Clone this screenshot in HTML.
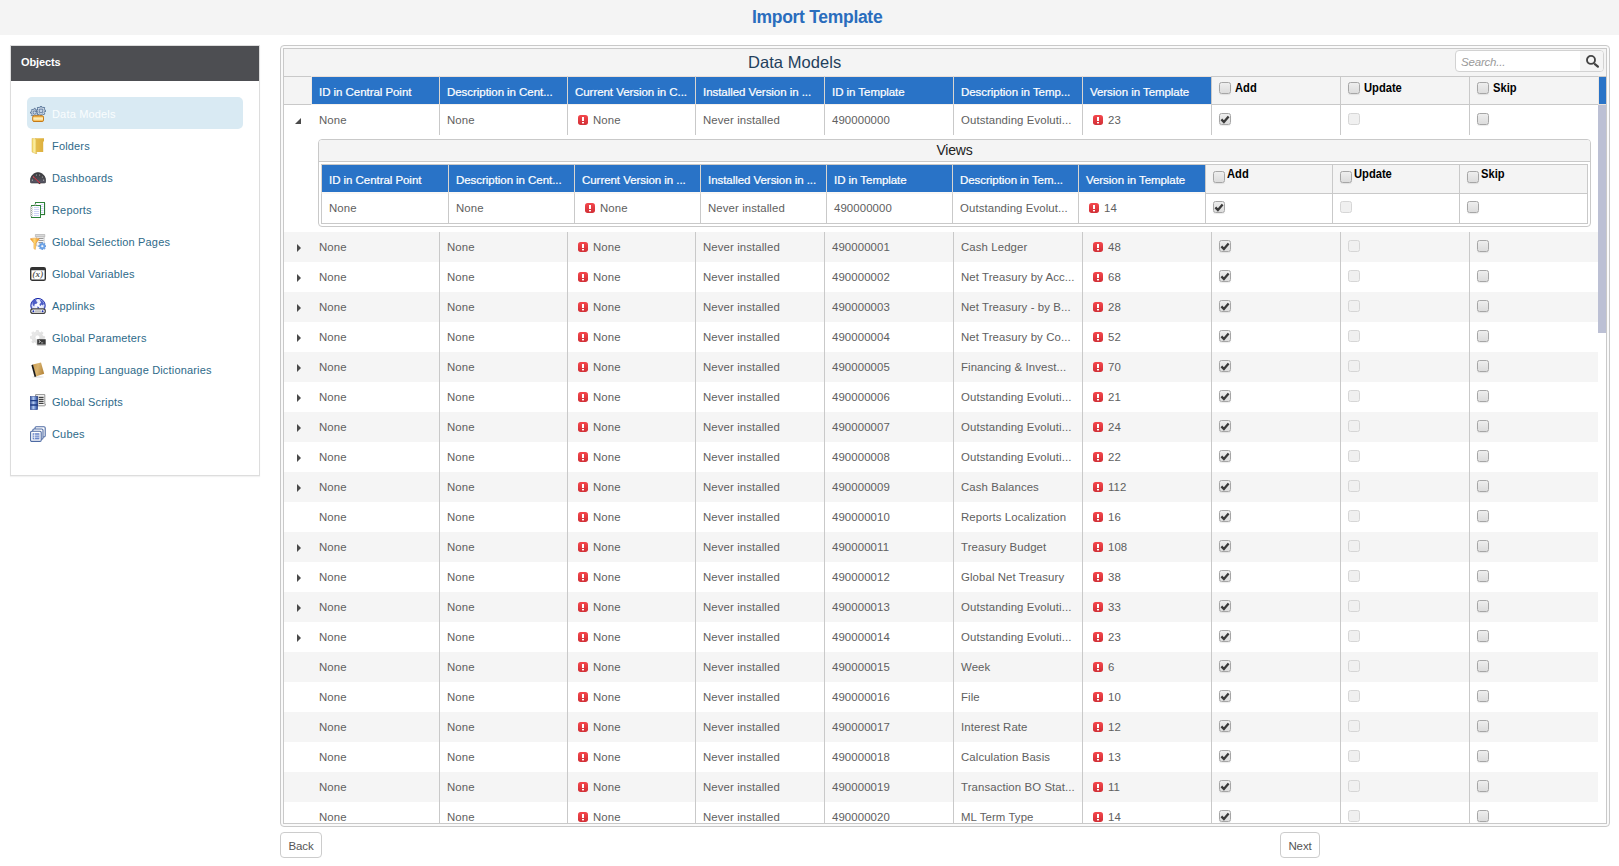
<!DOCTYPE html>
<html lang="en">
<head>
<meta charset="utf-8">
<title>Import Template</title>
<style>
*{box-sizing:border-box}
html,body{margin:0;padding:0}
body{width:1619px;height:866px;overflow:hidden;background:#fff;position:relative;
 font-family:"Liberation Sans",sans-serif;font-size:11px;color:#595959}
.topbar{position:absolute;left:0;top:0;width:1619px;height:35px;background:#f4f4f4}
.topbar h1{position:absolute;left:752px;top:6px;margin:0;font-size:17.5px;line-height:22px;font-weight:bold;color:#2a6dbd;letter-spacing:-.3px;white-space:nowrap}

/* sidebar */
.side{position:absolute;left:10px;top:45px;width:250px;height:431px;border:1px solid #ddd;background:#fff;box-shadow:0 1px 1px rgba(0,0,0,.05)}
.side-h{height:35px;background:#4d4e52;color:#fff;font-weight:bold;font-size:11px;line-height:33px;padding-left:10px;letter-spacing:-.12px}
.side-b{padding:16px 16px 0 16px}
.item{height:32px;width:216px;border-radius:5px;position:relative;color:#2e6a89;font-size:11px;line-height:34px;white-space:nowrap}
.item.sel{background:#d9eaf3;color:#fafdfe}
.item svg{position:absolute;left:3px;top:9px}
.item span{position:absolute;left:25px;top:0;letter-spacing:.17px}

/* grid */
.gouter{position:absolute;left:280px;top:45px;width:1330px;height:782px;border:1px solid #c9c9c9;border-radius:4px;padding:2px;background:#fafafa}
.ginner{width:1324px;height:776px;border:1px solid #c9c9c9;position:relative;overflow:hidden;background:#fff}
.toolbar{height:27px;background:#f4f4f4;position:relative}
.gtitle{position:absolute;left:464px;top:1px;font-size:16.5px;line-height:24px;color:#23405c;letter-spacing:.06px;white-space:nowrap}
.search{position:absolute;left:1171px;top:1px;width:149px;height:22px;border:1px solid #d2d2d2;border-radius:4px;background:#fff;overflow:hidden}
.search .ph{position:absolute;left:5px;top:1px;line-height:21px;font-style:italic;font-size:11.5px;color:#9a9a9a;letter-spacing:-.19px}
.search .sbtn{position:absolute;right:0;top:0;width:23px;height:20px;background:#f4f4f4}
.search .sbtn svg{position:absolute;left:5px;top:3px}

.ghead{height:29px;position:relative;background:#fff}
.hsb{position:absolute;left:1314px;top:0;width:8px;height:29px;background:#2973c7;border-top:1px solid #c9c9c9;border-bottom:1px solid #e6e0da;border-left:1px solid #ece6e0}
table{border-collapse:separate;border-spacing:0;table-layout:fixed}
.mtable{width:1314px}
th,td{padding:0 0 0 7px;border-left:1px solid #c9c9c9;text-align:left;white-space:nowrap;overflow:hidden;font-weight:normal;vertical-align:middle}
th{height:29px;box-shadow:inset 0 1px 0 #eadfd8,inset 0 -1px 0 #f6f1ec;border-left-color:#d9d5d0;background:#2973c7;color:#fff;font-weight:normal;font-size:11.5px;letter-spacing:-.05px;padding-top:3px;padding-left:7px;-webkit-text-stroke:.22px #fff}
th.h{background:#f4f4f4;border-left:0;padding:0;box-shadow:inset 0 1px 0 #c9c9c9,inset 0 -1px 0 #c9c9c9}
th.h + th{border-left-color:#efe9e4}
th.ck{background:#f4f4f4;border-color:#c9c9c9;box-shadow:inset 0 1px 0 #c9c9c9,inset 0 -1px 0 #c9c9c9;color:#000;font-size:12px;padding-top:0;padding-left:7px;vertical-align:top;letter-spacing:0;-webkit-text-stroke:0}
th.ck .cb{margin-top:6px;vertical-align:top}
th.ck b{font-weight:bold;display:inline-block;margin-left:4px;line-height:14px;margin-top:5px;transform:scaleX(.93);transform-origin:0 50%;vertical-align:top}
td{height:30px;font-size:11.4px;color:#606060;letter-spacing:.1px}
td.h{border-left:0;padding:0;position:relative}
td.h + td{border-left-color:transparent}
tr.alt td{background:#f5f5f5}
.gbody{height:718px;overflow:hidden;position:relative}
.vthumb{position:absolute;left:1314px;top:0;width:8px;height:228px;background:#bcc0d4}
.warn{display:inline-block;vertical-align:middle;margin:0 5px 0 3px;position:relative;top:-1px}
td .warn + *{}
.cb{display:inline-block;width:12px;height:12px;border:1px solid #a6a6a6;border-radius:2.5px;background:linear-gradient(#eee,#dcdcdc);vertical-align:top;position:relative;box-shadow:0 1px 1px rgba(0,0,0,.08)}
td.c{padding-left:7px}
td.c .cb{margin-top:0;vertical-align:middle;position:relative;top:-1px}
.cb.dis{border-color:#d6d6d6;background:#f0f0f0;box-shadow:none}
.cb svg{position:absolute;left:0;top:0}
.aopen{position:absolute;left:11px;top:13px;width:0;height:0;border-style:solid;border-width:0 0 6px 6px;border-color:transparent transparent #4a4a4a transparent}
.aclosed{position:absolute;left:13px;top:12px;width:0;height:0;border-style:solid;border-width:4px 0 4px 4px;border-color:transparent transparent transparent #4a4a4a}

/* detail */
tr.detail > td{height:97px;background:#fff}
td.dcell{padding:4px 7px 5px 7px;border-left:0;vertical-align:top;overflow:visible}
.ngrid{width:1273px;height:88px;border:1px solid #c9c9c9;border-radius:4px;background:#fff;overflow:hidden}
.ntitle{height:22px;background:#f4f4f4;border-bottom:1px solid #c9c9c9;text-align:center;font-size:14px;line-height:20px;color:#222;letter-spacing:-.2px}
.nwrap{padding:2px}
.ntable{width:1267px;border:1px solid #c9c9c9;border-left:0;border-bottom:0}
.ntable th{height:29px;box-shadow:inset 0 -2px 0 #fbf8f5;padding-top:1px}
.ntable th.ck{height:29px;box-shadow:inset 0 -1px 0 #c9c9c9;padding-top:0}
.ntable td{height:30px;background:#fff;border-bottom:1px solid #c9c9c9;padding-bottom:1px}
.ntable th.ck .cb{margin-top:6px;margin-left:0}
.ntable th.ck b{margin-left:2px;margin-top:2px}

.btn{position:absolute;top:832px;height:26px;border:1px solid #ccc;border-radius:4px;background:#fff;color:#555;font-size:11.5px;line-height:27px;text-align:center;letter-spacing:-.1px}
.btn.back{left:280px;width:42px}
.btn.next{left:1280px;width:40px}

</style>
</head>
<body>
<div class="topbar"><h1>Import Template</h1></div>

<div class="side">
  <div class="side-h">Objects</div>
  <div class="side-b"><div class="item sel"><svg width="16" height="16" viewBox="0 0 16 16" ><defs><linearGradient id="dmo" x1="0" y1="0" x2="0" y2="1"><stop offset="0" stop-color="#f0a32a"/><stop offset=".3" stop-color="#fbd98a"/><stop offset=".55" stop-color="#fff3c8"/><stop offset="1" stop-color="#f2a21d"/></linearGradient></defs><path d="M4.05 3.57 L4.16 2.33 L5.24 2.33 L5.35 3.57 L6.38 4.00 L7.34 3.20 L8.10 3.96 L7.30 4.92 L7.73 5.95 L8.97 6.06 L8.97 7.14 L7.73 7.25 L7.30 8.28 L8.10 9.24 L7.34 10.00 L6.38 9.20 L5.35 9.63 L5.24 10.87 L4.16 10.87 L4.05 9.63 L3.02 9.20 L2.06 10.00 L1.30 9.24 L2.10 8.28 L1.67 7.25 L0.43 7.14 L0.43 6.06 L1.67 5.95 L2.10 4.92 L1.30 3.96 L2.06 3.20 L3.02 4.00 z" fill="#dfe8f2" stroke="#46658c" stroke-width="0.8" stroke-linejoin="round"/><circle cx="4.7" cy="6.6" r="1.7" fill="#c3d3e6" stroke="#46658c" stroke-width="0.8"/><path d="M10.26 1.45 L10.39 0.04 L11.61 0.04 L11.74 1.45 L12.91 1.94 L14.00 1.03 L14.87 1.90 L13.96 2.99 L14.45 4.16 L15.86 4.29 L15.86 5.51 L14.45 5.64 L13.96 6.81 L14.87 7.90 L14.00 8.77 L12.91 7.86 L11.74 8.35 L11.61 9.76 L10.39 9.76 L10.26 8.35 L9.09 7.86 L8.00 8.77 L7.13 7.90 L8.04 6.81 L7.55 5.64 L6.14 5.51 L6.14 4.29 L7.55 4.16 L8.04 2.99 L7.13 1.90 L8.00 1.03 L9.09 1.94 z" fill="#e3ebf4" stroke="#3f5f88" stroke-width="0.8" stroke-linejoin="round"/><circle cx="11" cy="4.9" r="2.0" fill="#c3d3e6" stroke="#3f5f88" stroke-width="0.8"/><rect x="2.7" y="9.8" width="10.8" height="5.7" rx="1.3" fill="url(#dmo)" stroke="#c47a18" stroke-width="1"/></svg><span>Data Models</span></div><div class="item"><svg width="16" height="16" viewBox="0 0 16 16" ><defs><linearGradient id="fo1" x1="0" y1="0" x2="1" y2="0"><stop offset="0" stop-color="#e8c04f"/><stop offset="1" stop-color="#dcae3d"/></linearGradient><linearGradient id="fo2" x1="0" y1="0" x2="1" y2="0"><stop offset="0" stop-color="#f3d566"/><stop offset=".5" stop-color="#fbf0a5"/><stop offset="1" stop-color="#e9c556"/></linearGradient></defs><path d="M5 0.2h9v3.2h-.8V14H5z" fill="url(#fo1)"/><path d="M2 0.4l4.6 .6v15L2 14z" fill="url(#fo2)" stroke="#dbb548" stroke-width=".5"/></svg><span>Folders</span></div><div class="item"><svg width="16" height="16" viewBox="0 0 16 16" ><defs><linearGradient id="da1" x1="0" y1="0" x2="0" y2="1"><stop offset="0" stop-color="#3a3a3d"/><stop offset=".55" stop-color="#4a4a50"/><stop offset="1" stop-color="#5b596b"/></linearGradient></defs><path d="M0.2 11.6C0.2 6.4 3.6 2.6 8 2.6s7.8 3.8 7.8 9c0 .9-.5 1.4-1.4 1.4H1.6C.7 13 .2 12.5 .2 11.6z" fill="url(#da1)" stroke="#2c2c2e" stroke-width=".6"/><path d="M8.2 13l1.3 1.2L10.6 13z" fill="#222"/><g fill="#b9b9b9"><circle cx="2.4" cy="10.2" r=".6"/><circle cx="3.6" cy="7" r=".5"/><circle cx="6.4" cy="5" r=".6"/><circle cx="9.6" cy="5" r=".6"/><circle cx="12.4" cy="7" r=".6"/><circle cx="13.6" cy="10.2" r=".6"/></g><path d="M3.2 6.6L9.9 13.1" stroke="#ee2a3a" stroke-width="1" stroke-linecap="round"/></svg><span>Dashboards</span></div><div class="item"><svg width="16" height="16" viewBox="0 0 16 16" ><rect x="5.5" y=".5" width="9" height="12" fill="#fdfdff" stroke="#2d8339" stroke-width="1"/><g stroke="#d3d7f6" stroke-width="1"><path d="M10.500 2.500h3M10.500 4.500h3M10.500 6.500h3M10.500 8.500h3M10.500 10.500h3"/></g><path d="M14.800 1v11.800H6" fill="none" stroke="#1f5f29" stroke-width=".5" opacity=".6"/><rect x="1.500" y="3.500" width="9" height="12" fill="#fdfdff" stroke="#2d8339" stroke-width="1"/><g stroke="#cfd3f5" stroke-width="1"><path d="M4 5.500h5M4 7.500h5M4 9.500h5M4 11.500h5M4 13.500h5"/></g><g fill="#fff" stroke="#8f8f8f" stroke-width=".5"><circle cx="1.300" cy="5.500" r=".95"/><circle cx="1.300" cy="7.500" r=".95"/><circle cx="1.300" cy="9.500" r=".95"/><circle cx="1.300" cy="11.500" r=".95"/><circle cx="1.300" cy="13.500" r=".95"/></g><circle cx="5.200" cy="2.600" r=".8" fill="#fff" stroke="#8f8f8f" stroke-width=".5"/></svg><span>Reports</span></div><div class="item"><svg width="16" height="16" viewBox="0 0 16 16" ><defs><linearGradient id="gs1" x1="0" y1="0" x2="1" y2="0"><stop offset="0" stop-color="#ee8610"/><stop offset=".45" stop-color="#fdd978"/><stop offset="1" stop-color="#ec8a12"/></linearGradient></defs><path d="M6.400 2.600h7.800V12H6.400z" fill="#f6f6f6" stroke="#b5b5b5" stroke-width=".6"/><path d="M5.400 .5h9.400v2.300H5.400z" fill="#d9d9d9" stroke="#a8a8a8" stroke-width=".6"/><g stroke="#8c8c8c" stroke-width=".9"><path d="M8.500 4.500h5M8.500 6.500h5M8.500 8.500h4"/></g><path d="M.2 4.800c2.800-.9 6.400-.9 9.200 0L6 9.200 5.300 15.600 3.900 14.600V9.200z" fill="url(#gs1)" stroke="#e38412" stroke-width=".4"/><path d="M11.72 9.52 L11.84 8.53 L12.76 8.53 L12.88 9.52 L13.79 9.90 L14.57 9.28 L15.22 9.93 L14.60 10.71 L14.98 11.62 L15.97 11.74 L15.97 12.66 L14.98 12.78 L14.60 13.69 L15.22 14.47 L14.57 15.12 L13.79 14.50 L12.88 14.88 L12.76 15.87 L11.84 15.87 L11.72 14.88 L10.81 14.50 L10.03 15.12 L9.38 14.47 L10.00 13.69 L9.62 12.78 L8.63 12.66 L8.63 11.74 L9.62 11.62 L10.00 10.71 L9.38 9.93 L10.03 9.28 L10.81 9.90 z" fill="#6aa3ea" stroke="#4a86d4" stroke-width="0.5" stroke-linejoin="round"/><circle cx="12.3" cy="12.2" r="1.4" fill="#f2f7fd" stroke="#4a86d4" stroke-width="0.4"/></svg><span>Global Selection Pages</span></div><div class="item"><svg width="16" height="16" viewBox="0 0 16 16" ><rect x=".7" y="1.7" width="14.6" height="12.6" rx="1.6" fill="#fff" stroke="#333" stroke-width="1.4"/><rect x=".7" y="1.7" width="14.6" height="2.6" rx="1" fill="#333"/><text x="8" y="10.700" font-family="Liberation Serif,serif" font-size="9" font-style="italic" font-weight="bold" text-anchor="middle" fill="#555" letter-spacing=".3">(x)</text></svg><span>Global Variables</span></div><div class="item"><svg width="16" height="16" viewBox="0 0 16 16" ><defs><radialGradient id="ap1" cx=".5" cy=".45" r=".62"><stop offset="0" stop-color="#ffffff"/><stop offset=".6" stop-color="#e3e8fb"/><stop offset=".85" stop-color="#8f9de0"/><stop offset="1" stop-color="#1a2fb0"/></radialGradient></defs><circle cx="8" cy="7.600" r="7.200" fill="url(#ap1)" stroke="#1626a8" stroke-width="1"/><path d="M2.200 4.600c1.300-2.300 3.200-3.400 4.600-3.300l-.8 1.700 1.600 1.200-1 1.600-1.800 .2-.6 2.400-1.400-1.200z M9.800 1.800c1.900.4 3.500 1.900 4.200 3.900l-1.200 1.800-1.200-.9-1.400 1.700-.8-2 1.600-1.600z M7 8.600l1.800.4.600 1.400-1.600.4z" fill="#2438b8" opacity=".8"/><rect x=".7" y="10.900" width="14.600" height="4.500" rx="2.200" fill="#fff" stroke="#444" stroke-width="1.200"/><circle cx="3.400" cy="13.150" r="1" fill="#1a2fb0"/><circle cx="12.600" cy="13.150" r="1" fill="#1a2fb0"/><path d="M5.200 13.150h5.600" stroke="#8a8a8a" stroke-width="1.400"/><path d="M5.600 13.150h4.800" stroke="#fff" stroke-width=".6"/></svg><span>Applinks</span></div><div class="item"><svg width="16" height="16" viewBox="0 0 16 16" ><defs><linearGradient id="gp1" x1="0" y1="0" x2="1" y2="1"><stop offset="0" stop-color="#efefef"/><stop offset="1" stop-color="#d6d6d6"/></linearGradient></defs><path d="M6.23 1.98 L6.49 0.16 L8.31 0.16 L8.57 1.98 L10.41 2.74 L11.87 1.63 L13.17 2.93 L12.06 4.39 L12.82 6.23 L14.64 6.49 L14.64 8.31 L12.82 8.57 L12.06 10.41 L13.17 11.87 L11.87 13.17 L10.41 12.06 L8.57 12.82 L8.31 14.64 L6.49 14.64 L6.23 12.82 L4.39 12.06 L2.93 13.17 L1.63 11.87 L2.74 10.41 L1.98 8.57 L0.16 8.31 L0.16 6.49 L1.98 6.23 L2.74 4.39 L1.63 2.93 L2.93 1.63 L4.39 2.74 z" fill="url(#gp1)" stroke="#d9d9d9" stroke-width="0.5" stroke-linejoin="round"/><circle cx="7.4" cy="7.4" r="2.3" fill="#fff" stroke="#d9d9d9" stroke-width="0.4"/><rect x="7.200" y="9.200" width="8.500" height="5.500" fill="#3a3a3a"/><rect x="7.200" y="14.600" width="8.500" height=".9" fill="#9a9a9a"/><path d="M8.800 10.400l1.700 1.100-1.700 1.100" fill="none" stroke="#ededed" stroke-width=".8"/><path d="M11 12.900h2.200" stroke="#d5d5d5" stroke-width=".7"/></svg><span>Global Parameters</span></div><div class="item"><svg width="16" height="16" viewBox="0 0 16 16" ><defs><linearGradient id="ml1" x1="0" y1="0" x2="1" y2=".3"><stop offset="0" stop-color="#c99a4e"/><stop offset=".5" stop-color="#d9b470"/><stop offset="1" stop-color="#b98a40"/></linearGradient></defs><ellipse cx="8" cy="15" rx="6" ry=".8" fill="#000" opacity=".12"/><path d="M2.800 2.600L11 .4l3.200 11.400-8.400 2.600z" fill="url(#ml1)"/><path d="M1.400 3.200l1.600-.6 3.200 11.800-1.600.6z" fill="#1a1a1a"/></svg><span>Mapping Language Dictionaries</span></div><div class="item"><svg width="16" height="16" viewBox="0 0 16 16" ><defs><linearGradient id="gs2" x1="0" y1="0" x2="1" y2="0"><stop offset="0" stop-color="#2a4d9c"/><stop offset=".4" stop-color="#b9cdf0"/><stop offset=".6" stop-color="#7f9fdb"/><stop offset="1" stop-color="#1f3d86"/></linearGradient></defs><path d="M5.600 .6h9.200v9.800h.8c0 1-.6 1.400-1.400 1.400H7c.6-.4.800-.8.800-1.600V2.400H5.600z" fill="#fafafa" stroke="#777" stroke-width=".8"/><g stroke="#444" stroke-width="1.100"><path d="M8.800 3.400h4.800M8.800 5.400h4.800M8.800 7.400h4.800M8.800 9.400h4.800"/></g><rect x=".3" y="2.500" width="7.400" height="13.200" fill="url(#gs2)" stroke="#243f8a" stroke-width=".5"/><path d="M.3 6.600h7.400M.3 11h7.400" stroke="#1f3d86" stroke-width="1.300"/></svg><span>Global Scripts</span></div><div class="item"><svg width="16" height="16" viewBox="0 0 16 16" ><rect x="5" y=".8" width="10.200" height="10.200" rx="1.200" fill="#fff" stroke="#4d6aa3" stroke-width="1.100"/><rect x="2.800" y="3" width="10.200" height="10.200" rx="1.200" fill="#fff" stroke="#4d6aa3" stroke-width="1.100"/><rect x=".6" y="5.200" width="10.600" height="10.200" rx="1.200" fill="#fff" stroke="#4d6aa3" stroke-width="1.100"/><rect x="2.600" y="7.200" width="6.800" height="6.200" fill="#6a86c8"/><g stroke="#fff" stroke-width=".7"><path d="M2.600 9.200h6.800M2.600 11.200h6.800M4.600 7.200v6.200"/></g></svg><span>Cubes</span></div></div>
</div>

<div class="gouter">
  <div class="ginner">
    <div class="toolbar">
      <div class="gtitle">Data Models</div>
      <div class="search"><span class="ph">Search...</span><span class="sbtn"><svg width="16" height="16" viewBox="0 0 16 16"><circle cx="6" cy="5.9" r="4" fill="none" stroke="#444" stroke-width="1.9"/><path d="M9.900 10.100L12.900 12.700" stroke="#444" stroke-width="2.2" stroke-linecap="round"/></svg></span></div>
    </div>
    <div class="ghead">
      <table class="mtable"><colgroup><col style="width:27px"><col style="width:128px"><col style="width:128px"><col style="width:128px"><col style="width:129px"><col style="width:129px"><col style="width:129px"><col style="width:129px"><col style="width:129px"><col style="width:129px"><col style="width:129px"></colgroup><thead><tr><th class="h"></th><th><span>ID in Central Point</span></th><th><span>Description in Cent...</span></th><th><span>Current Version in C...</span></th><th><span>Installed Version in ...</span></th><th><span>ID in Template</span></th><th><span>Description in Temp...</span></th><th><span>Version in Template</span></th><th class="ck"><span class="cb "></span><b>Add</b></th><th class="ck"><span class="cb "></span><b>Update</b></th><th class="ck"><span class="cb "></span><b>Skip</b></th></tr></thead></table>
      <div class="hsb"></div>
    </div>
    <div class="gbody">
      <table class="mtable"><colgroup><col style="width:27px"><col style="width:128px"><col style="width:128px"><col style="width:128px"><col style="width:129px"><col style="width:129px"><col style="width:129px"><col style="width:129px"><col style="width:129px"><col style="width:129px"><col style="width:129px"></colgroup><tbody>
<tr class=""><td class="h"><i class="aopen"></i></td><td>None</td><td>None</td><td><svg class="warn" width="10" height="10" viewBox="0 0 10 10"><rect x="0" y="0" width="10" height="10" rx="2.700" fill="url(#wg)"/><rect x="4" y="2" width="2" height="4" fill="#fff"/><rect x="4" y="7" width="2" height="1.4" fill="#fff"/></svg>None</td><td>Never installed</td><td>490000000</td><td>Outstanding Evoluti...</td><td><svg class="warn" width="10" height="10" viewBox="0 0 10 10"><rect x="0" y="0" width="10" height="10" rx="2.700" fill="url(#wg)"/><rect x="4" y="2" width="2" height="4" fill="#fff"/><rect x="4" y="7" width="2" height="1.4" fill="#fff"/></svg>23</td><td class="c"><span class="cb on"><svg width="10" height="10" viewBox="0 0 10 10"><path d="M1.4 5.4L3.9 8 8.6 2.4" fill="none" stroke="#3a3a3a" stroke-width="2.3"/></svg></span></td><td class="c"><span class="cb dis"></span></td><td class="c"><span class="cb "></span></td></tr>
<tr class="detail"><td class="h"></td><td colspan="10" class="dcell"><div class="ngrid"><div class="ntitle">Views</div><div class="nwrap"><table class="ntable"><colgroup><col style="width:127px"><col style="width:126px"><col style="width:126px"><col style="width:126px"><col style="width:126px"><col style="width:126px"><col style="width:127px"><col style="width:127px"><col style="width:127px"><col style="width:128px"></colgroup><thead><tr><th><span>ID in Central Point</span></th><th><span>Description in Cent...</span></th><th><span>Current Version in ...</span></th><th><span>Installed Version in ...</span></th><th><span>ID in Template</span></th><th><span>Description in Tem...</span></th><th><span>Version in Template</span></th><th class="ck"><span class="cb "></span><b>Add</b></th><th class="ck"><span class="cb "></span><b>Update</b></th><th class="ck"><span class="cb "></span><b>Skip</b></th></tr></thead><tbody><tr><td>None</td><td>None</td><td><svg class="warn" width="10" height="10" viewBox="0 0 10 10"><defs><linearGradient id="wg" x1="0" y1="0" x2="0" y2="1"><stop offset="0" stop-color="#f4474c"/><stop offset="1" stop-color="#d12f36"/></linearGradient></defs><rect x="0" y="0" width="10" height="10" rx="2.700" fill="url(#wg)"/><rect x="4" y="2" width="2" height="4" fill="#fff"/><rect x="4" y="7" width="2" height="1.4" fill="#fff"/></svg>None</td><td>Never installed</td><td>490000000</td><td>Outstanding Evolut...</td><td><svg class="warn" width="10" height="10" viewBox="0 0 10 10"><rect x="0" y="0" width="10" height="10" rx="2.700" fill="url(#wg)"/><rect x="4" y="2" width="2" height="4" fill="#fff"/><rect x="4" y="7" width="2" height="1.4" fill="#fff"/></svg>14</td><td class="c"><span class="cb on"><svg width="10" height="10" viewBox="0 0 10 10"><path d="M1.4 5.4L3.9 8 8.6 2.4" fill="none" stroke="#3a3a3a" stroke-width="2.3"/></svg></span></td><td class="c"><span class="cb dis"></span></td><td class="c"><span class="cb "></span></td></tr></tbody></table></div></div></td></tr>
<tr class="alt"><td class="h"><i class="aclosed"></i></td><td>None</td><td>None</td><td><svg class="warn" width="10" height="10" viewBox="0 0 10 10"><rect x="0" y="0" width="10" height="10" rx="2.700" fill="url(#wg)"/><rect x="4" y="2" width="2" height="4" fill="#fff"/><rect x="4" y="7" width="2" height="1.4" fill="#fff"/></svg>None</td><td>Never installed</td><td>490000001</td><td>Cash Ledger</td><td><svg class="warn" width="10" height="10" viewBox="0 0 10 10"><rect x="0" y="0" width="10" height="10" rx="2.700" fill="url(#wg)"/><rect x="4" y="2" width="2" height="4" fill="#fff"/><rect x="4" y="7" width="2" height="1.4" fill="#fff"/></svg>48</td><td class="c"><span class="cb on"><svg width="10" height="10" viewBox="0 0 10 10"><path d="M1.4 5.4L3.9 8 8.6 2.4" fill="none" stroke="#3a3a3a" stroke-width="2.3"/></svg></span></td><td class="c"><span class="cb dis"></span></td><td class="c"><span class="cb "></span></td></tr>
<tr class=""><td class="h"><i class="aclosed"></i></td><td>None</td><td>None</td><td><svg class="warn" width="10" height="10" viewBox="0 0 10 10"><rect x="0" y="0" width="10" height="10" rx="2.700" fill="url(#wg)"/><rect x="4" y="2" width="2" height="4" fill="#fff"/><rect x="4" y="7" width="2" height="1.4" fill="#fff"/></svg>None</td><td>Never installed</td><td>490000002</td><td>Net Treasury by Acc...</td><td><svg class="warn" width="10" height="10" viewBox="0 0 10 10"><rect x="0" y="0" width="10" height="10" rx="2.700" fill="url(#wg)"/><rect x="4" y="2" width="2" height="4" fill="#fff"/><rect x="4" y="7" width="2" height="1.4" fill="#fff"/></svg>68</td><td class="c"><span class="cb on"><svg width="10" height="10" viewBox="0 0 10 10"><path d="M1.4 5.4L3.9 8 8.6 2.4" fill="none" stroke="#3a3a3a" stroke-width="2.3"/></svg></span></td><td class="c"><span class="cb dis"></span></td><td class="c"><span class="cb "></span></td></tr>
<tr class="alt"><td class="h"><i class="aclosed"></i></td><td>None</td><td>None</td><td><svg class="warn" width="10" height="10" viewBox="0 0 10 10"><rect x="0" y="0" width="10" height="10" rx="2.700" fill="url(#wg)"/><rect x="4" y="2" width="2" height="4" fill="#fff"/><rect x="4" y="7" width="2" height="1.4" fill="#fff"/></svg>None</td><td>Never installed</td><td>490000003</td><td>Net Treasury - by B...</td><td><svg class="warn" width="10" height="10" viewBox="0 0 10 10"><rect x="0" y="0" width="10" height="10" rx="2.700" fill="url(#wg)"/><rect x="4" y="2" width="2" height="4" fill="#fff"/><rect x="4" y="7" width="2" height="1.4" fill="#fff"/></svg>28</td><td class="c"><span class="cb on"><svg width="10" height="10" viewBox="0 0 10 10"><path d="M1.4 5.4L3.9 8 8.6 2.4" fill="none" stroke="#3a3a3a" stroke-width="2.3"/></svg></span></td><td class="c"><span class="cb dis"></span></td><td class="c"><span class="cb "></span></td></tr>
<tr class=""><td class="h"><i class="aclosed"></i></td><td>None</td><td>None</td><td><svg class="warn" width="10" height="10" viewBox="0 0 10 10"><rect x="0" y="0" width="10" height="10" rx="2.700" fill="url(#wg)"/><rect x="4" y="2" width="2" height="4" fill="#fff"/><rect x="4" y="7" width="2" height="1.4" fill="#fff"/></svg>None</td><td>Never installed</td><td>490000004</td><td>Net Treasury by Co...</td><td><svg class="warn" width="10" height="10" viewBox="0 0 10 10"><rect x="0" y="0" width="10" height="10" rx="2.700" fill="url(#wg)"/><rect x="4" y="2" width="2" height="4" fill="#fff"/><rect x="4" y="7" width="2" height="1.4" fill="#fff"/></svg>52</td><td class="c"><span class="cb on"><svg width="10" height="10" viewBox="0 0 10 10"><path d="M1.4 5.4L3.9 8 8.6 2.4" fill="none" stroke="#3a3a3a" stroke-width="2.3"/></svg></span></td><td class="c"><span class="cb dis"></span></td><td class="c"><span class="cb "></span></td></tr>
<tr class="alt"><td class="h"><i class="aclosed"></i></td><td>None</td><td>None</td><td><svg class="warn" width="10" height="10" viewBox="0 0 10 10"><rect x="0" y="0" width="10" height="10" rx="2.700" fill="url(#wg)"/><rect x="4" y="2" width="2" height="4" fill="#fff"/><rect x="4" y="7" width="2" height="1.4" fill="#fff"/></svg>None</td><td>Never installed</td><td>490000005</td><td>Financing &amp; Invest...</td><td><svg class="warn" width="10" height="10" viewBox="0 0 10 10"><rect x="0" y="0" width="10" height="10" rx="2.700" fill="url(#wg)"/><rect x="4" y="2" width="2" height="4" fill="#fff"/><rect x="4" y="7" width="2" height="1.4" fill="#fff"/></svg>70</td><td class="c"><span class="cb on"><svg width="10" height="10" viewBox="0 0 10 10"><path d="M1.4 5.4L3.9 8 8.6 2.4" fill="none" stroke="#3a3a3a" stroke-width="2.3"/></svg></span></td><td class="c"><span class="cb dis"></span></td><td class="c"><span class="cb "></span></td></tr>
<tr class=""><td class="h"><i class="aclosed"></i></td><td>None</td><td>None</td><td><svg class="warn" width="10" height="10" viewBox="0 0 10 10"><rect x="0" y="0" width="10" height="10" rx="2.700" fill="url(#wg)"/><rect x="4" y="2" width="2" height="4" fill="#fff"/><rect x="4" y="7" width="2" height="1.4" fill="#fff"/></svg>None</td><td>Never installed</td><td>490000006</td><td>Outstanding Evoluti...</td><td><svg class="warn" width="10" height="10" viewBox="0 0 10 10"><rect x="0" y="0" width="10" height="10" rx="2.700" fill="url(#wg)"/><rect x="4" y="2" width="2" height="4" fill="#fff"/><rect x="4" y="7" width="2" height="1.4" fill="#fff"/></svg>21</td><td class="c"><span class="cb on"><svg width="10" height="10" viewBox="0 0 10 10"><path d="M1.4 5.4L3.9 8 8.6 2.4" fill="none" stroke="#3a3a3a" stroke-width="2.3"/></svg></span></td><td class="c"><span class="cb dis"></span></td><td class="c"><span class="cb "></span></td></tr>
<tr class="alt"><td class="h"><i class="aclosed"></i></td><td>None</td><td>None</td><td><svg class="warn" width="10" height="10" viewBox="0 0 10 10"><rect x="0" y="0" width="10" height="10" rx="2.700" fill="url(#wg)"/><rect x="4" y="2" width="2" height="4" fill="#fff"/><rect x="4" y="7" width="2" height="1.4" fill="#fff"/></svg>None</td><td>Never installed</td><td>490000007</td><td>Outstanding Evoluti...</td><td><svg class="warn" width="10" height="10" viewBox="0 0 10 10"><rect x="0" y="0" width="10" height="10" rx="2.700" fill="url(#wg)"/><rect x="4" y="2" width="2" height="4" fill="#fff"/><rect x="4" y="7" width="2" height="1.4" fill="#fff"/></svg>24</td><td class="c"><span class="cb on"><svg width="10" height="10" viewBox="0 0 10 10"><path d="M1.4 5.4L3.9 8 8.6 2.4" fill="none" stroke="#3a3a3a" stroke-width="2.3"/></svg></span></td><td class="c"><span class="cb dis"></span></td><td class="c"><span class="cb "></span></td></tr>
<tr class=""><td class="h"><i class="aclosed"></i></td><td>None</td><td>None</td><td><svg class="warn" width="10" height="10" viewBox="0 0 10 10"><rect x="0" y="0" width="10" height="10" rx="2.700" fill="url(#wg)"/><rect x="4" y="2" width="2" height="4" fill="#fff"/><rect x="4" y="7" width="2" height="1.4" fill="#fff"/></svg>None</td><td>Never installed</td><td>490000008</td><td>Outstanding Evoluti...</td><td><svg class="warn" width="10" height="10" viewBox="0 0 10 10"><rect x="0" y="0" width="10" height="10" rx="2.700" fill="url(#wg)"/><rect x="4" y="2" width="2" height="4" fill="#fff"/><rect x="4" y="7" width="2" height="1.4" fill="#fff"/></svg>22</td><td class="c"><span class="cb on"><svg width="10" height="10" viewBox="0 0 10 10"><path d="M1.4 5.4L3.9 8 8.6 2.4" fill="none" stroke="#3a3a3a" stroke-width="2.3"/></svg></span></td><td class="c"><span class="cb dis"></span></td><td class="c"><span class="cb "></span></td></tr>
<tr class="alt"><td class="h"><i class="aclosed"></i></td><td>None</td><td>None</td><td><svg class="warn" width="10" height="10" viewBox="0 0 10 10"><rect x="0" y="0" width="10" height="10" rx="2.700" fill="url(#wg)"/><rect x="4" y="2" width="2" height="4" fill="#fff"/><rect x="4" y="7" width="2" height="1.4" fill="#fff"/></svg>None</td><td>Never installed</td><td>490000009</td><td>Cash Balances</td><td><svg class="warn" width="10" height="10" viewBox="0 0 10 10"><rect x="0" y="0" width="10" height="10" rx="2.700" fill="url(#wg)"/><rect x="4" y="2" width="2" height="4" fill="#fff"/><rect x="4" y="7" width="2" height="1.4" fill="#fff"/></svg>112</td><td class="c"><span class="cb on"><svg width="10" height="10" viewBox="0 0 10 10"><path d="M1.4 5.4L3.9 8 8.6 2.4" fill="none" stroke="#3a3a3a" stroke-width="2.3"/></svg></span></td><td class="c"><span class="cb dis"></span></td><td class="c"><span class="cb "></span></td></tr>
<tr class=""><td class="h"></td><td>None</td><td>None</td><td><svg class="warn" width="10" height="10" viewBox="0 0 10 10"><rect x="0" y="0" width="10" height="10" rx="2.700" fill="url(#wg)"/><rect x="4" y="2" width="2" height="4" fill="#fff"/><rect x="4" y="7" width="2" height="1.4" fill="#fff"/></svg>None</td><td>Never installed</td><td>490000010</td><td>Reports Localization</td><td><svg class="warn" width="10" height="10" viewBox="0 0 10 10"><rect x="0" y="0" width="10" height="10" rx="2.700" fill="url(#wg)"/><rect x="4" y="2" width="2" height="4" fill="#fff"/><rect x="4" y="7" width="2" height="1.4" fill="#fff"/></svg>16</td><td class="c"><span class="cb on"><svg width="10" height="10" viewBox="0 0 10 10"><path d="M1.4 5.4L3.9 8 8.6 2.4" fill="none" stroke="#3a3a3a" stroke-width="2.3"/></svg></span></td><td class="c"><span class="cb dis"></span></td><td class="c"><span class="cb "></span></td></tr>
<tr class="alt"><td class="h"><i class="aclosed"></i></td><td>None</td><td>None</td><td><svg class="warn" width="10" height="10" viewBox="0 0 10 10"><rect x="0" y="0" width="10" height="10" rx="2.700" fill="url(#wg)"/><rect x="4" y="2" width="2" height="4" fill="#fff"/><rect x="4" y="7" width="2" height="1.4" fill="#fff"/></svg>None</td><td>Never installed</td><td>490000011</td><td>Treasury Budget</td><td><svg class="warn" width="10" height="10" viewBox="0 0 10 10"><rect x="0" y="0" width="10" height="10" rx="2.700" fill="url(#wg)"/><rect x="4" y="2" width="2" height="4" fill="#fff"/><rect x="4" y="7" width="2" height="1.4" fill="#fff"/></svg>108</td><td class="c"><span class="cb on"><svg width="10" height="10" viewBox="0 0 10 10"><path d="M1.4 5.4L3.9 8 8.6 2.4" fill="none" stroke="#3a3a3a" stroke-width="2.3"/></svg></span></td><td class="c"><span class="cb dis"></span></td><td class="c"><span class="cb "></span></td></tr>
<tr class=""><td class="h"><i class="aclosed"></i></td><td>None</td><td>None</td><td><svg class="warn" width="10" height="10" viewBox="0 0 10 10"><rect x="0" y="0" width="10" height="10" rx="2.700" fill="url(#wg)"/><rect x="4" y="2" width="2" height="4" fill="#fff"/><rect x="4" y="7" width="2" height="1.4" fill="#fff"/></svg>None</td><td>Never installed</td><td>490000012</td><td>Global Net Treasury</td><td><svg class="warn" width="10" height="10" viewBox="0 0 10 10"><rect x="0" y="0" width="10" height="10" rx="2.700" fill="url(#wg)"/><rect x="4" y="2" width="2" height="4" fill="#fff"/><rect x="4" y="7" width="2" height="1.4" fill="#fff"/></svg>38</td><td class="c"><span class="cb on"><svg width="10" height="10" viewBox="0 0 10 10"><path d="M1.4 5.4L3.9 8 8.6 2.4" fill="none" stroke="#3a3a3a" stroke-width="2.3"/></svg></span></td><td class="c"><span class="cb dis"></span></td><td class="c"><span class="cb "></span></td></tr>
<tr class="alt"><td class="h"><i class="aclosed"></i></td><td>None</td><td>None</td><td><svg class="warn" width="10" height="10" viewBox="0 0 10 10"><rect x="0" y="0" width="10" height="10" rx="2.700" fill="url(#wg)"/><rect x="4" y="2" width="2" height="4" fill="#fff"/><rect x="4" y="7" width="2" height="1.4" fill="#fff"/></svg>None</td><td>Never installed</td><td>490000013</td><td>Outstanding Evoluti...</td><td><svg class="warn" width="10" height="10" viewBox="0 0 10 10"><rect x="0" y="0" width="10" height="10" rx="2.700" fill="url(#wg)"/><rect x="4" y="2" width="2" height="4" fill="#fff"/><rect x="4" y="7" width="2" height="1.4" fill="#fff"/></svg>33</td><td class="c"><span class="cb on"><svg width="10" height="10" viewBox="0 0 10 10"><path d="M1.4 5.4L3.9 8 8.6 2.4" fill="none" stroke="#3a3a3a" stroke-width="2.3"/></svg></span></td><td class="c"><span class="cb dis"></span></td><td class="c"><span class="cb "></span></td></tr>
<tr class=""><td class="h"><i class="aclosed"></i></td><td>None</td><td>None</td><td><svg class="warn" width="10" height="10" viewBox="0 0 10 10"><rect x="0" y="0" width="10" height="10" rx="2.700" fill="url(#wg)"/><rect x="4" y="2" width="2" height="4" fill="#fff"/><rect x="4" y="7" width="2" height="1.4" fill="#fff"/></svg>None</td><td>Never installed</td><td>490000014</td><td>Outstanding Evoluti...</td><td><svg class="warn" width="10" height="10" viewBox="0 0 10 10"><rect x="0" y="0" width="10" height="10" rx="2.700" fill="url(#wg)"/><rect x="4" y="2" width="2" height="4" fill="#fff"/><rect x="4" y="7" width="2" height="1.4" fill="#fff"/></svg>23</td><td class="c"><span class="cb on"><svg width="10" height="10" viewBox="0 0 10 10"><path d="M1.4 5.4L3.9 8 8.6 2.4" fill="none" stroke="#3a3a3a" stroke-width="2.3"/></svg></span></td><td class="c"><span class="cb dis"></span></td><td class="c"><span class="cb "></span></td></tr>
<tr class="alt"><td class="h"></td><td>None</td><td>None</td><td><svg class="warn" width="10" height="10" viewBox="0 0 10 10"><rect x="0" y="0" width="10" height="10" rx="2.700" fill="url(#wg)"/><rect x="4" y="2" width="2" height="4" fill="#fff"/><rect x="4" y="7" width="2" height="1.4" fill="#fff"/></svg>None</td><td>Never installed</td><td>490000015</td><td>Week</td><td><svg class="warn" width="10" height="10" viewBox="0 0 10 10"><rect x="0" y="0" width="10" height="10" rx="2.700" fill="url(#wg)"/><rect x="4" y="2" width="2" height="4" fill="#fff"/><rect x="4" y="7" width="2" height="1.4" fill="#fff"/></svg>6</td><td class="c"><span class="cb on"><svg width="10" height="10" viewBox="0 0 10 10"><path d="M1.4 5.4L3.9 8 8.6 2.4" fill="none" stroke="#3a3a3a" stroke-width="2.3"/></svg></span></td><td class="c"><span class="cb dis"></span></td><td class="c"><span class="cb "></span></td></tr>
<tr class=""><td class="h"></td><td>None</td><td>None</td><td><svg class="warn" width="10" height="10" viewBox="0 0 10 10"><rect x="0" y="0" width="10" height="10" rx="2.700" fill="url(#wg)"/><rect x="4" y="2" width="2" height="4" fill="#fff"/><rect x="4" y="7" width="2" height="1.4" fill="#fff"/></svg>None</td><td>Never installed</td><td>490000016</td><td>File</td><td><svg class="warn" width="10" height="10" viewBox="0 0 10 10"><rect x="0" y="0" width="10" height="10" rx="2.700" fill="url(#wg)"/><rect x="4" y="2" width="2" height="4" fill="#fff"/><rect x="4" y="7" width="2" height="1.4" fill="#fff"/></svg>10</td><td class="c"><span class="cb on"><svg width="10" height="10" viewBox="0 0 10 10"><path d="M1.4 5.4L3.9 8 8.6 2.4" fill="none" stroke="#3a3a3a" stroke-width="2.3"/></svg></span></td><td class="c"><span class="cb dis"></span></td><td class="c"><span class="cb "></span></td></tr>
<tr class="alt"><td class="h"></td><td>None</td><td>None</td><td><svg class="warn" width="10" height="10" viewBox="0 0 10 10"><rect x="0" y="0" width="10" height="10" rx="2.700" fill="url(#wg)"/><rect x="4" y="2" width="2" height="4" fill="#fff"/><rect x="4" y="7" width="2" height="1.4" fill="#fff"/></svg>None</td><td>Never installed</td><td>490000017</td><td>Interest Rate</td><td><svg class="warn" width="10" height="10" viewBox="0 0 10 10"><rect x="0" y="0" width="10" height="10" rx="2.700" fill="url(#wg)"/><rect x="4" y="2" width="2" height="4" fill="#fff"/><rect x="4" y="7" width="2" height="1.4" fill="#fff"/></svg>12</td><td class="c"><span class="cb on"><svg width="10" height="10" viewBox="0 0 10 10"><path d="M1.4 5.4L3.9 8 8.6 2.4" fill="none" stroke="#3a3a3a" stroke-width="2.3"/></svg></span></td><td class="c"><span class="cb dis"></span></td><td class="c"><span class="cb "></span></td></tr>
<tr class=""><td class="h"></td><td>None</td><td>None</td><td><svg class="warn" width="10" height="10" viewBox="0 0 10 10"><rect x="0" y="0" width="10" height="10" rx="2.700" fill="url(#wg)"/><rect x="4" y="2" width="2" height="4" fill="#fff"/><rect x="4" y="7" width="2" height="1.4" fill="#fff"/></svg>None</td><td>Never installed</td><td>490000018</td><td>Calculation Basis</td><td><svg class="warn" width="10" height="10" viewBox="0 0 10 10"><rect x="0" y="0" width="10" height="10" rx="2.700" fill="url(#wg)"/><rect x="4" y="2" width="2" height="4" fill="#fff"/><rect x="4" y="7" width="2" height="1.4" fill="#fff"/></svg>13</td><td class="c"><span class="cb on"><svg width="10" height="10" viewBox="0 0 10 10"><path d="M1.4 5.4L3.9 8 8.6 2.4" fill="none" stroke="#3a3a3a" stroke-width="2.3"/></svg></span></td><td class="c"><span class="cb dis"></span></td><td class="c"><span class="cb "></span></td></tr>
<tr class="alt"><td class="h"></td><td>None</td><td>None</td><td><svg class="warn" width="10" height="10" viewBox="0 0 10 10"><rect x="0" y="0" width="10" height="10" rx="2.700" fill="url(#wg)"/><rect x="4" y="2" width="2" height="4" fill="#fff"/><rect x="4" y="7" width="2" height="1.4" fill="#fff"/></svg>None</td><td>Never installed</td><td>490000019</td><td>Transaction BO Stat...</td><td><svg class="warn" width="10" height="10" viewBox="0 0 10 10"><rect x="0" y="0" width="10" height="10" rx="2.700" fill="url(#wg)"/><rect x="4" y="2" width="2" height="4" fill="#fff"/><rect x="4" y="7" width="2" height="1.4" fill="#fff"/></svg>11</td><td class="c"><span class="cb on"><svg width="10" height="10" viewBox="0 0 10 10"><path d="M1.4 5.4L3.9 8 8.6 2.4" fill="none" stroke="#3a3a3a" stroke-width="2.3"/></svg></span></td><td class="c"><span class="cb dis"></span></td><td class="c"><span class="cb "></span></td></tr>
<tr class=""><td class="h"></td><td>None</td><td>None</td><td><svg class="warn" width="10" height="10" viewBox="0 0 10 10"><rect x="0" y="0" width="10" height="10" rx="2.700" fill="url(#wg)"/><rect x="4" y="2" width="2" height="4" fill="#fff"/><rect x="4" y="7" width="2" height="1.4" fill="#fff"/></svg>None</td><td>Never installed</td><td>490000020</td><td>ML Term Type</td><td><svg class="warn" width="10" height="10" viewBox="0 0 10 10"><rect x="0" y="0" width="10" height="10" rx="2.700" fill="url(#wg)"/><rect x="4" y="2" width="2" height="4" fill="#fff"/><rect x="4" y="7" width="2" height="1.4" fill="#fff"/></svg>14</td><td class="c"><span class="cb on"><svg width="10" height="10" viewBox="0 0 10 10"><path d="M1.4 5.4L3.9 8 8.6 2.4" fill="none" stroke="#3a3a3a" stroke-width="2.3"/></svg></span></td><td class="c"><span class="cb dis"></span></td><td class="c"><span class="cb "></span></td></tr>
      </tbody></table>
      <div class="vthumb"></div>
    </div>
  </div>
</div>

<div class="btn back">Back</div>
<div class="btn next">Next</div>
</body>
</html>
